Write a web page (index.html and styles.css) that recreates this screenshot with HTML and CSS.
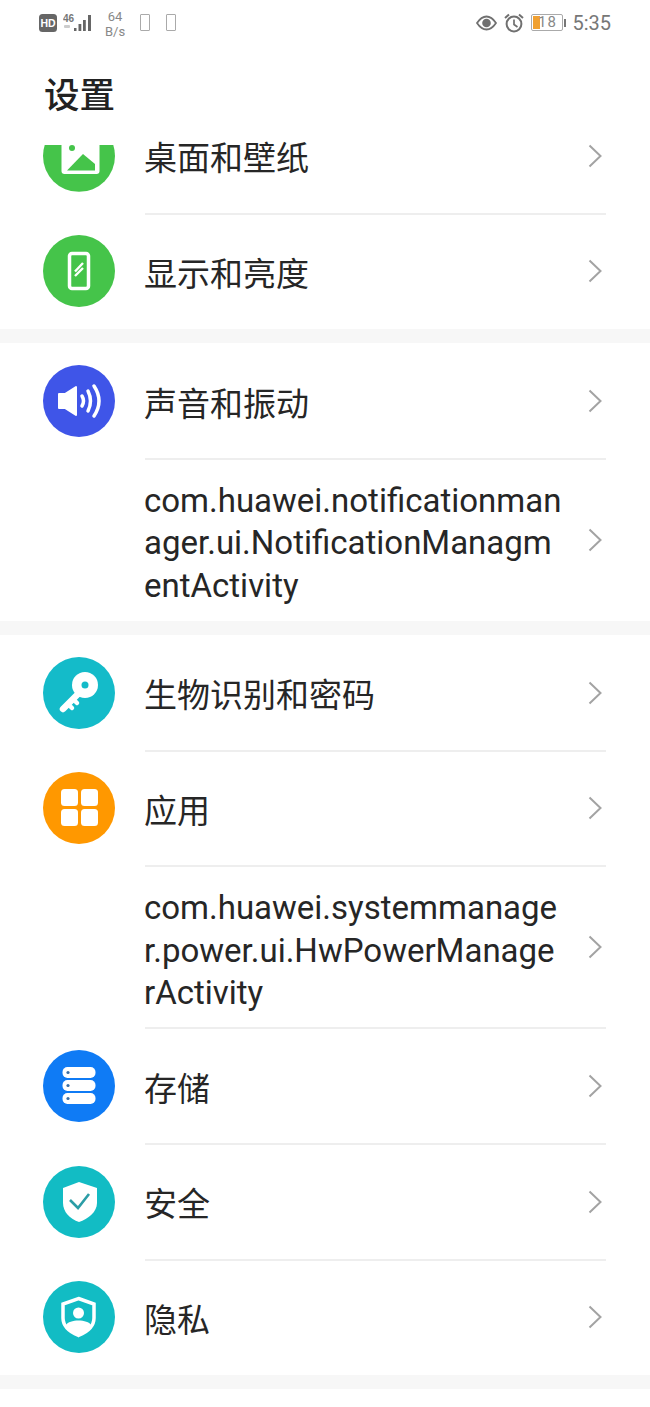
FILE: index.html
```html
<!DOCTYPE html>
<html lang="zh-CN">
<head>
  <meta charset="UTF-8">
  <meta name="viewport" content="width=device-width, initial-scale=1.0">
  <title>设置</title>
  <link rel="stylesheet" href="styles.css">
</head>
<body>
  <svg class="defs" width="0" height="0" aria-hidden="true">
    <symbol id="chevron" viewBox="0 0 14 24">
      <path d="M1.5 1.5L12.5 12L1.5 22.5" fill="none" stroke="#a3a3a3" stroke-width="2"/>
    </symbol>
  </svg>

  <div class="status-bar">
    <div class="status-left">
      <svg class="hd" width="18" height="18" viewBox="0 0 18 18">
        <rect width="18" height="18" rx="3.5" fill="#666"/>
        <text x="9" y="13" text-anchor="middle" class="hd-text">HD</text>
      </svg>
      <svg class="signal" width="31" height="20" viewBox="0 0 31 20">
        <text x="0" y="9" class="sig-text">46</text>
        <rect x="1" y="12" width="6" height="3" rx="1" fill="#ccc"/>
        <rect x="11" y="15" width="2.5" height="3" fill="#666"/>
        <rect x="15.5" y="11" width="2.8" height="7" fill="#666"/>
        <rect x="20" y="7" width="2.8" height="11" fill="#666"/>
        <rect x="25" y="2" width="3" height="16" fill="#666"/>
      </svg>
      <div class="speed"><span>64</span><span>B/s</span></div>
      <div class="tofu"></div>
      <div class="tofu"></div>
    </div>
    <div class="status-right">
      <svg width="21" height="16" viewBox="0 0 21 16">
        <path d="M1 8C4 3.5 7 1.5 10.5 1.5S17 3.5 20 8C17 12.5 14 14.5 10.5 14.5S4 12.5 1 8Z" fill="none" stroke="#707070" stroke-width="1.8"/>
        <circle cx="10.5" cy="8" r="4.3" fill="#707070"/>
      </svg>
      <svg width="20" height="20" viewBox="0 0 20 20">
        <circle cx="10" cy="11" r="7.4" fill="none" stroke="#707070" stroke-width="2"/>
        <path d="M10 6.5V11.5L13.5 14" fill="none" stroke="#707070" stroke-width="1.7"/>
        <path d="M1 5L5 1.5M19 5L15 1.5" stroke="#707070" stroke-width="2"/>
      </svg>
      <div class="battery">
        <div class="battery-body"><div class="battery-fill"></div><span>18</span></div>
        <div class="battery-tip"></div>
      </div>
      <span class="clock">5:35</span>
    </div>
  </div>

  <h1 class="page-title">设置</h1>

  <div class="list">
    <div class="group group-scrolled">
      <div class="row">
        <svg class="icon icon-cut" viewBox="0 0 72 72">
          <circle cx="36" cy="36" r="36" fill="#45c44a"/>
          <rect x="18.5" y="16" width="38" height="38" rx="3" fill="#fff"/>
          <circle cx="29" cy="28" r="3" fill="#45c44a"/>
          <path d="M24 50.5L40 34L52 44V50.5Z" fill="#45c44a"/>
        </svg>
        <div class="label">桌面和壁纸</div>
        <svg class="chevron"><use href="#chevron"/></svg>
      </div>
      <div class="row">
        <svg class="icon" viewBox="0 0 72 72">
          <circle cx="36" cy="36" r="36" fill="#45c44a"/>
          <rect x="26.5" y="18.5" width="19" height="35" rx="2.5" fill="none" stroke="#fff" stroke-width="3.5"/>
          <path d="M32 36.5L40 28M32 41L40 33" stroke="#fff" stroke-width="2.4"/>
        </svg>
        <div class="label">显示和亮度</div>
        <svg class="chevron"><use href="#chevron"/></svg>
      </div>
    </div>

    <div class="group">
      <div class="row">
        <svg class="icon" viewBox="0 0 72 72">
          <circle cx="36" cy="36" r="36" fill="#3f55e8"/>
          <path d="M16 29H22L33 22V50L22 43H16Z" fill="#fff" stroke="#fff" stroke-linejoin="round" stroke-width="2"/>
          <path d="M39 31Q42 36 39 41M45 26Q50 36 45 46M51 21Q61 36 51 51" fill="none" stroke="#fff" stroke-width="3.5" stroke-linecap="round"/>
        </svg>
        <div class="label">声音和振动</div>
        <svg class="chevron"><use href="#chevron"/></svg>
      </div>
      <div class="row row-long">
        <div class="icon-space"></div>
        <div class="label label-long">com.huawei.notificationmanager.ui.NotificationManagmentActivity</div>
        <svg class="chevron"><use href="#chevron"/></svg>
      </div>
    </div>

    <div class="group">
      <div class="row">
        <svg class="icon" viewBox="0 0 72 72">
          <circle cx="36" cy="36" r="36" fill="#14bbc9"/>
          <path d="M36 36L20 52" stroke="#fff" stroke-width="6.5" stroke-linecap="round"/>
          <path d="M25 47L29 51M30 42L34 46" stroke="#fff" stroke-width="4.5" stroke-linecap="round"/>
          <circle cx="42" cy="28" r="13" fill="#fff"/>
          <circle cx="42" cy="28" r="3.5" fill="#14bbc9"/>
        </svg>
        <div class="label">生物识别和密码</div>
        <svg class="chevron"><use href="#chevron"/></svg>
      </div>
      <div class="row">
        <svg class="icon" viewBox="0 0 72 72">
          <circle cx="36" cy="36" r="36" fill="#ff9800"/>
          <rect x="18" y="17" width="17" height="17" rx="3.5" fill="#fff"/>
          <rect x="38" y="17" width="17" height="17" rx="3.5" fill="#fff"/>
          <rect x="18" y="37" width="17" height="17" rx="3.5" fill="#fff"/>
          <rect x="38" y="37" width="17" height="17" rx="3.5" fill="#fff"/>
        </svg>
        <div class="label">应用</div>
        <svg class="chevron"><use href="#chevron"/></svg>
      </div>
      <div class="row row-long">
        <div class="icon-space"></div>
        <div class="label label-long">com.huawei.systemmanager.power.ui.HwPowerManagerActivity</div>
        <svg class="chevron"><use href="#chevron"/></svg>
      </div>
      <div class="row">
        <svg class="icon" viewBox="0 0 72 72">
          <circle cx="36" cy="36" r="36" fill="#0f7bf5"/>
          <rect x="19.5" y="17" width="33" height="11" rx="5" fill="#fff"/>
          <rect x="19.5" y="30" width="33" height="11" rx="5" fill="#fff"/>
          <rect x="19.5" y="43" width="33" height="11" rx="5" fill="#fff"/>
          <circle cx="25" cy="22.5" r="1.6" fill="#3a6ea5"/>
          <circle cx="25" cy="35.5" r="1.6" fill="#3a6ea5"/>
          <circle cx="25" cy="48.5" r="1.6" fill="#3a6ea5"/>
        </svg>
        <div class="label">存储</div>
        <svg class="chevron"><use href="#chevron"/></svg>
      </div>
      <div class="row">
        <svg class="icon" viewBox="0 0 72 72">
          <circle cx="36" cy="36" r="36" fill="#12bcc4"/>
          <path d="M36 16L54 22V37C54 46 45 53 36 56C27 53 20 46 20 37V22Z" fill="#fff"/>
          <path d="M27 34L35 42L46 28" fill="none" stroke="#2b9da6" stroke-width="2.6"/>
        </svg>
        <div class="label">安全</div>
        <svg class="chevron"><use href="#chevron"/></svg>
      </div>
      <div class="row">
        <svg class="icon" viewBox="0 0 72 72">
          <circle cx="36" cy="36" r="36" fill="#12bcc4"/>
          <path d="M35.5 17.5L51 23V37C51 45 44 51 35.5 54.5C27 51 20 45 20 37V23Z" fill="none" stroke="#fff" stroke-width="3.5"/>
          <circle cx="35.5" cy="32" r="5.5" fill="#fff"/>
          <path d="M23 44C26 38 45 38 48 44C45 49 40 52 35.5 54C31 52 26 49 23 44Z" fill="#fff"/>
        </svg>
        <div class="label">隐私</div>
        <svg class="chevron"><use href="#chevron"/></svg>
      </div>
    </div>
  </div>
</body>
</html>
```

FILE: styles.css
```css
html, body {
  margin: 0;
  background: #fff;
}
body {
  font-family: Roboto, "Noto Sans CJK SC", sans-serif;
  color: #262626;
  height: 1407px;
  overflow: hidden;
}
.defs {
  display: block;
}

/* status bar */
.status-bar {
  height: 45px;
  display: flex;
  align-items: center;
  justify-content: space-between;
  padding: 0 39px;
  color: #707070;
}
.status-left, .status-right {
  display: flex;
  align-items: center;
}
.hd {
  margin-right: 6px;
}
.hd-text {
  font-family: "Liberation Sans", sans-serif;
  font-size: 10.5px;
  font-weight: bold;
  fill: #fff;
}
.sig-text {
  font-family: "Liberation Sans", sans-serif;
  font-size: 10px;
  font-weight: bold;
  fill: #777;
}
.speed {
  display: flex;
  flex-direction: column;
  align-items: center;
  font-size: 13px;
  line-height: 15px;
  margin: 2px 15px 0 11px;
  color: #888;
}
.tofu {
  width: 8px;
  height: 15px;
  border: 1px solid #aaa;
  border-radius: 1px;
  margin-right: 16px;
}
.tofu:last-child {
  margin-right: 0;
}
.status-right {
  gap: 7px;
}
.battery {
  display: flex;
  align-items: center;
  gap: 1px;
}
.battery-body {
  position: relative;
  width: 30px;
  height: 15px;
  border: 1px solid #aaa;
  border-radius: 2px;
  font-size: 15px;
  line-height: 15px;
  text-align: center;
  letter-spacing: 1px;
  color: #888;
}
.battery-fill {
  position: absolute;
  left: 1px;
  top: 1px;
  bottom: 1px;
  width: 7px;
  background: #f0a030;
}
.battery-body span {
  position: relative;
}
.battery-tip {
  width: 2px;
  height: 8px;
  background: #777;
}
.clock {
  font-size: 20px;
  color: #777;
  margin-left: -1px;
}

/* title */
.page-title {
  height: 100px;
  line-height: 102px;
  margin: 0;
  padding-left: 44px;
  font-size: 35.5px;
  font-weight: 500;
  color: #222;
}

/* list, scrolled so the first row sits under the title */
.list {
  height: 1262px;
}
.group {
  border-bottom: 14.5px solid #f7f7f7;
}
.group-scrolled {
  margin-top: -47.2px;
}
.row {
  display: flex;
  align-items: center;
  height: 115.7px;
  padding: 0 44px 0 43px;
  position: relative;
}
.row + .row::before {
  content: "";
  position: absolute;
  left: 145px;
  right: 44px;
  top: -1px;
  height: 2px;
  background: #eeeeee;
}
.row-long {
  height: 162px;
}
.icon, .icon-space {
  flex: none;
  width: 72px;
  height: 72px;
  margin-right: 29px;
}
.icon-cut {
  clip-path: inset(25.4px 0 0 0);
}
.label {
  flex: 1;
  font-size: 33px;
  line-height: 28px;
  padding-top: 7px;
}
.label-long {
  font-size: 33px;
  line-height: 42.5px;
  padding-top: 7px;
  width: 420px;
  flex: none;
  word-break: break-all;
}
.chevron {
  flex: none;
  width: 14px;
  height: 24px;
  margin-left: auto;
  margin-right: 4px;
}
```
